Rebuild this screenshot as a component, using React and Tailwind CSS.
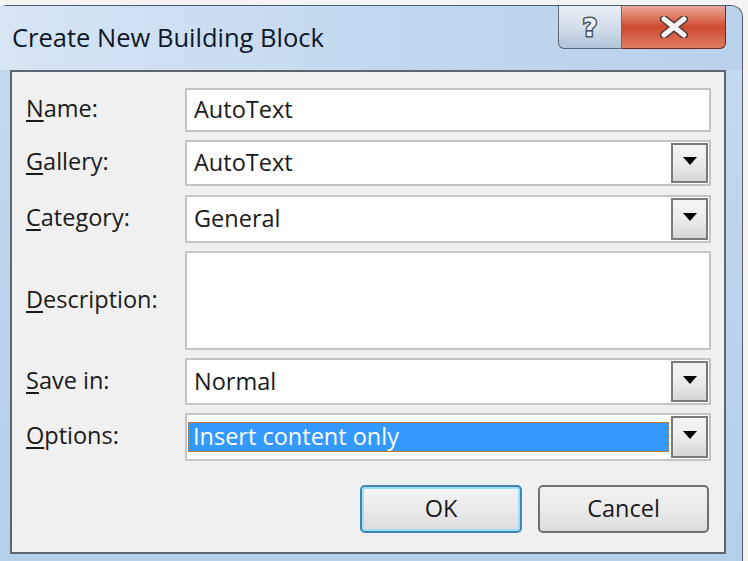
import React from "react";

const FONT = { fontFamily: '"Open Sans", "Noto Sans", sans-serif' };

// label with the access key underlined
function Label({ k, rest }) {
  return (
    <span className="text-[23.5px] text-[#1a1a1a] leading-none">
      <span className="underline underline-offset-[3px] decoration-[1.5px]">{k}</span>
      {rest}
    </span>
  );
}

function DropButton() {
  return (
    <div className="w-[37px] self-stretch my-[1px] mr-[1px] border-2 border-[#7a7a7a] bg-gradient-to-b from-[#f4f4f4] via-[#ececec] to-[#d6d6d6] flex items-center justify-center">
      <svg width="14" height="8" viewBox="0 0 14 8" className="-mt-[4px]">
        <polygon points="0,0 14,0 7,8" fill="#000" />
      </svg>
    </div>
  );
}

function Field({ label, value, height, mt, combo, selected }) {
  return (
    <div className="flex items-center" style={{ marginTop: mt }}>
      <div className="w-[173px] pl-[14px]">{label}</div>
      <div
        className="w-[526px] flex items-stretch bg-white border-2 border-[#c4c4c8]"
        style={{ height }}
      >
        <div className="flex-1 flex items-center pl-[1px] pr-[2px]">
          {selected ? (
            <div className="w-full h-[30px] bg-[#3399ff] border border-dotted border-[#c8782a] flex items-center pl-[4px] text-white text-[23.5px]">
              {value}
            </div>
          ) : (
            <span className="pl-[6px] text-[23.5px] text-[#1a1a1a]">{value}</span>
          )}
        </div>
        {combo && <DropButton />}
      </div>
    </div>
  );
}

export default function App() {
  return (
    <div className="w-[748px] h-[561px] bg-[#f4f4f4] pt-[5px] overflow-hidden" style={FONT}>
      <div className="w-[743px] h-[556px] rounded-tr-[12px] rounded-tl-[6px] border border-l-0 border-b-0 border-[#4f5d6c] bg-gradient-to-b from-[#c6dbef] via-[#bcd3ec] to-[#b5cfeb] flex flex-col">
        {/* title bar */}
        <div className="h-[64px] flex items-start justify-between bg-gradient-to-r from-[#d6e6f5] via-[#c3d8ee] to-[#b9d1ea] rounded-tr-[12px]">
          <div className="pl-[12px] pt-[19px] text-[25.5px] text-[#101828] leading-none">
            Create New Building Block
          </div>
          <div className="flex mr-[16px]">
            <div className="w-[64px] h-[43px] border border-[#5f6a78] border-t-0 rounded-bl-[6px] bg-gradient-to-b from-[#e8eef5] via-[#d3dfeb] to-[#b2c4d8] flex items-center justify-center">
              <span
                className="text-[25px] font-bold text-[#eef2f6] leading-none"
                style={{ fontFamily: '"DejaVu Sans", sans-serif', WebkitTextStroke: "3px #4a5360", paintOrder: "stroke fill" }}
              >
                ?
              </span>
            </div>
            <div className="w-[104px] h-[43px] border border-[#6b2a22] border-t-0 border-l-0 rounded-br-[6px] bg-gradient-to-b from-[#e9a999] via-[#cf4a2f] to-[#dc7b62] flex items-center justify-center">
              <svg width="30" height="22" viewBox="0 0 30 22">
                <path d="M5 3 L25 19 M25 3 L5 19" stroke="#4a3a38" strokeWidth="8" strokeLinecap="round" />
                <path d="M5 3 L25 19 M25 3 L5 19" stroke="#f6f2f0" strokeWidth="5" strokeLinecap="round" />
              </svg>
            </div>
          </div>
        </div>

        {/* client area */}
        <div className="ml-[10px] mr-[16px] h-[484px] border-2 border-[#5e6770] bg-[#f0f0f0] flex flex-col">
          <Field mt={16} height={44} label={<Label k="N" rest="ame:" />} value="AutoText" />
          <Field mt={8} height={46} combo label={<Label k="G" rest="allery:" />} value="AutoText" />
          <Field mt={9} height={48} combo label={<Label k="C" rest="ategory:" />} value="General" />
          <Field mt={8} height={99} label={<Label k="D" rest="escription:" />} value="" />
          <Field mt={8} height={47} combo label={<Label k="S" rest="ave in:" />} value="Normal" />
          <Field mt={8} height={48} combo selected label={<Label k="O" rest="ptions:" />} value="Insert content only" />

          <div className="flex justify-end gap-[16px] pr-[15px] mt-[24px]">
            <button className="w-[162px] h-[48px] rounded-[5px] border-2 border-[#3c86b8] shadow-[inset_0_0_0_2px_#9fe0f8] bg-gradient-to-b from-[#f3f3f3] via-[#ebebeb] to-[#dcdcdc] text-[23.5px] text-[#1a1a1a]">
              OK
            </button>
            <button className="w-[171px] h-[48px] rounded-[5px] border-2 border-[#707070] bg-gradient-to-b from-[#f3f3f3] via-[#ebebeb] to-[#dcdcdc] text-[23.5px] text-[#1a1a1a]">
              Cancel
            </button>
          </div>
        </div>
      </div>
    </div>
  );
}
